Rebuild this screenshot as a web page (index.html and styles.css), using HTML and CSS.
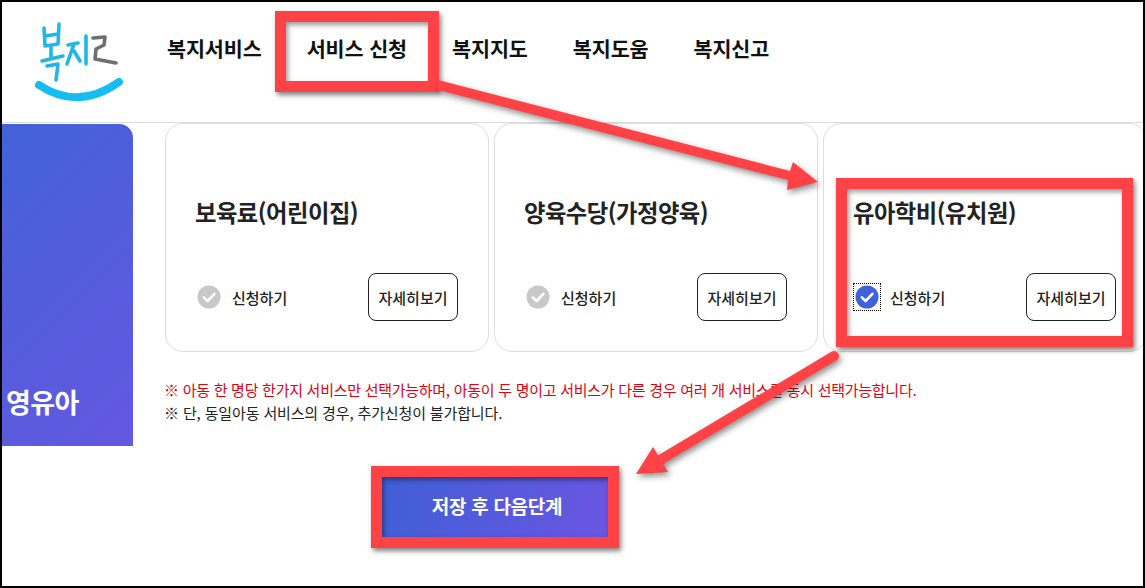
FILE: index.html
```html
<!DOCTYPE html>
<html lang="ko">
<head>
<meta charset="utf-8">
<title>복지로 서비스 신청</title>
<link rel="stylesheet" href="styles.css">
</head>
<body>
<div class="shot">
  <div class="frame">
    <header class="header">
      <svg class="logo" viewBox="30 15 100 90" aria-label="복지로">
        <g class="logo-blue">
          <path d="M44 27 L45 45 M59 23 L58 43 M45 35 L58 33 M45 45 L58 43 M51 45 L51 57 M42 60 L63 55"/>
          <path d="M47 65 L58 63 L56 79"/>
          <path d="M68 44 L78 42 M74 43 L67 63 M74 50 L80 60 M86 35 L86 63"/>
        </g>
        <path class="logo-gray" d="M93 37 L105 36 L104 44 L96 48 L95 58 L116 62"/>
        <path class="logo-smile" d="M39 84 Q78 110 119 81"/>
      </svg>
      <nav class="nav">
        <a class="nav-item">복지서비스</a>
        <a class="nav-item">서비스 신청</a>
        <a class="nav-item">복지지도</a>
        <a class="nav-item">복지도움</a>
        <a class="nav-item">복지신고</a>
      </nav>
    </header>
    <div class="content">
      <aside class="side"><span class="side-text">영유아</span></aside>
      <main class="main">
        <div class="cards">
          <section class="card">
            <h2 class="card-title">보육료(어린이집)</h2>
            <div class="card-row">
              <label class="choice">
                <span class="check">
                  <svg class="check-svg" viewBox="0 0 24 24"><circle class="disc-off" cx="12" cy="12" r="11.5"/><path class="tick" d="M6.8 12.4 L10.6 16 L17.4 8.8"/></svg>
                </span>
                <span class="choice-text">신청하기</span>
              </label>
              <button class="more">자세히보기</button>
            </div>
          </section>
          <section class="card">
            <h2 class="card-title">양육수당(가정양육)</h2>
            <div class="card-row">
              <label class="choice">
                <span class="check">
                  <svg class="check-svg" viewBox="0 0 24 24"><circle class="disc-off" cx="12" cy="12" r="11.5"/><path class="tick" d="M6.8 12.4 L10.6 16 L17.4 8.8"/></svg>
                </span>
                <span class="choice-text">신청하기</span>
              </label>
              <button class="more">자세히보기</button>
            </div>
          </section>
          <section class="card">
            <h2 class="card-title">유아학비(유치원)</h2>
            <div class="card-row">
              <label class="choice">
                <span class="check check-focus">
                  <svg class="check-svg" viewBox="0 0 24 24"><circle class="disc-on" cx="12" cy="12" r="11.5"/><path class="tick" d="M6.8 12.4 L10.6 16 L17.4 8.8"/></svg>
                </span>
                <span class="choice-text">신청하기</span>
              </label>
              <button class="more">자세히보기</button>
            </div>
          </section>
        </div>
        <p class="note note-red">※ 아동 한 명당 한가지 서비스만 선택가능하며, 아동이 두 명이고 서비스가 다른 경우 여러 개 서비스를 동시 선택가능합니다.</p>
        <p class="note note-plain">※ 단, 동일아동 서비스의 경우, 추가신청이 불가합니다.</p>
        <button class="save">저장 후 다음단계</button>
      </main>
    </div>
  </div>
  <div class="mark mark-nav"></div>
  <div class="mark mark-card"></div>
  <div class="mark mark-save"></div>
  <svg class="arrows" viewBox="0 0 1145 588">
    <polygon class="arrow-fill" points="438,80 790,171 793,162 818,182 787,190 788,180 438,90"/>
    <path class="arrow-line" d="M834 356 L660 460"/>
    <polygon class="arrow-fill" points="653,447 668,472 636,474"/>
  </svg>
</div>
</body>
</html>
```
FILE: styles.css
```css
* { box-sizing: border-box; }
html, body { margin: 0; padding: 0; background: #fff; }
body { font-family: "Noto Sans CJK KR", "Noto Sans", sans-serif; color: #222; overflow: hidden; }
.shot { position: relative; width: 1145px; height: 588px; }
.frame { width: 1145px; height: 588px; border: 2px solid #000; overflow: hidden; background: #fff; }

.header { display: flex; align-items: center; height: 121px; border-bottom: 1px solid #ddd; }
.logo { width: 100px; height: 90px; margin-left: 28px; margin-top: -3px; flex: none; fill: none; stroke-linecap: round; stroke-linejoin: round; }
.logo-blue { stroke: #22b6e8; stroke-width: 3.6; }
.logo-gray { stroke: #6e6e70; stroke-width: 3.6; }
.logo-smile { stroke: #17bdf2; stroke-width: 8; }
.nav { display: flex; gap: 45px; margin-left: 37px; margin-top: -29px; }
.nav-item { font-size: 20.7px; font-weight: 700; color: #111; white-space: nowrap; letter-spacing: -0.1px; }

.content { display: flex; align-items: flex-start; }
.side { width: 131px; height: 322px; margin-top: 1px; flex: none; display: flex; align-items: flex-end; padding: 0 0 24px 4px; border-top-right-radius: 14px; background: linear-gradient(135deg, #4362d8, #6458e0); }
.side-text { font-size: 27px; line-height: 40px; font-weight: 700; color: #fff; letter-spacing: -0.6px; }
.main { margin-left: 32px; flex: none; width: 1000px; }

.cards { display: flex; gap: 5px; }
.card { width: 324px; height: 229px; flex: none; padding: 73px 30px 30px; border: 1px solid #ddd; border-radius: 18px; background: #fff; }
.card-title { margin: 0 0 0 -1px; font-size: 23.3px; line-height: 30px; font-weight: 700; color: #222; letter-spacing: -0.5px; white-space: nowrap; }
.card-row { display: flex; justify-content: space-between; align-items: center; margin-top: 46px; }
.choice { display: flex; align-items: center; gap: 11px; margin-left: 1px; }
.check { display: block; width: 24px; height: 24px; }
.check-svg { display: block; width: 24px; height: 24px; }
.check-focus { outline: 1px dotted #000; outline-offset: 1px; }
.disc-off { fill: #c8c8c8; }
.disc-on { fill: #3f62d8; }
.tick { fill: none; stroke: #fff; stroke-width: 2.6; stroke-linecap: round; stroke-linejoin: round; }
.choice-text { font-size: 15px; font-weight: 500; color: #222; }
.more { width: 90px; height: 48px; padding: 0; border: 1px solid #222; border-radius: 8px; background: #fff; font-family: inherit; font-size: 15px; font-weight: 500; color: #222; }

.note { margin: 0 0 0 -1px; font-size: 15px; line-height: 23px; letter-spacing: -0.27px; color: #222; white-space: nowrap; }
.note-red { margin-top: 26px; color: #e00012; }
.note-plain { letter-spacing: -0.14px; }
.save { display: block; width: 240px; height: 70px; margin: 47px 0 0 212px; border: 0; padding: 0 0 2px; background: linear-gradient(100deg, #3f5fd6, #6c55e2); color: #fff; font-family: inherit; font-size: 19px; font-weight: 700; letter-spacing: -0.3px; }

.mark { position: absolute; border: 11px solid #ff4245; box-shadow: 2px 3px 5px rgba(0,0,0,.5), inset 2px 3px 5px rgba(0,0,0,.4); }
.mark-nav { left: 275px; top: 11px; width: 164px; height: 81px; }
.mark-card { left: 836px; top: 178px; width: 297px; height: 169px; }
.mark-save { left: 371px; top: 466px; width: 248px; height: 82px; }
.arrows { position: absolute; left: 0; top: 0; width: 1145px; height: 588px; filter: drop-shadow(2px 3px 3px rgba(0,0,0,.45)); }
.arrow-fill { fill: #ff4245; }
.arrow-line { fill: none; stroke: #ff4245; stroke-width: 10; stroke-linecap: round; }
```
